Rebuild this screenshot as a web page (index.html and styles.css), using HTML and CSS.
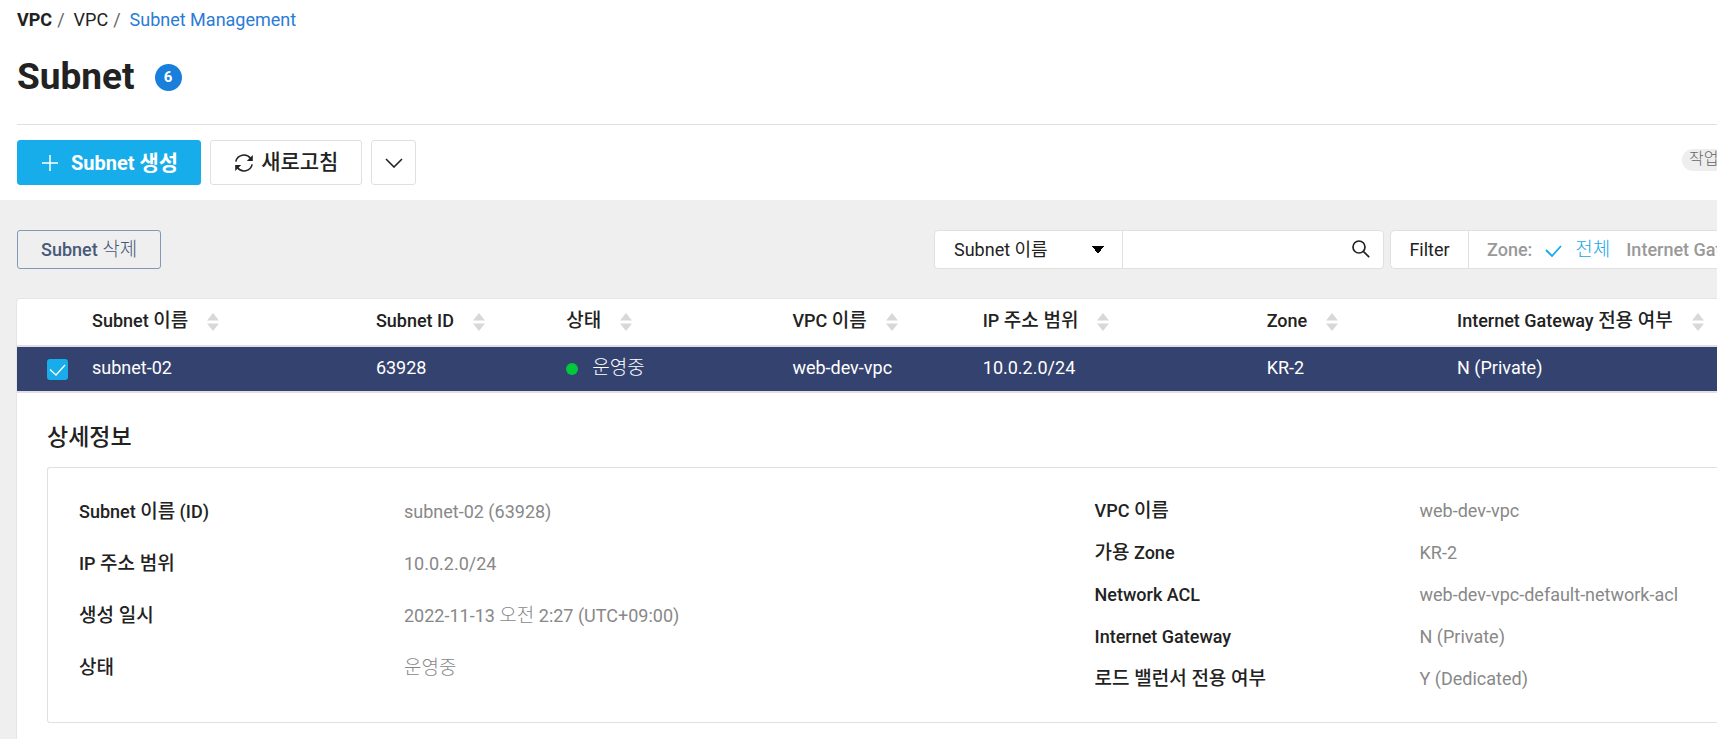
FILE: index.html
```html
<!DOCTYPE html>
<html lang="ko">
<head>
<meta charset="utf-8">
<meta name="viewport" content="width=device-width, initial-scale=1">
<title>Subnet Management</title>
<link rel="stylesheet" href="styles.css">
</head>
<body>
<svg class="sprite" aria-hidden="true">
  <symbol id="sort" viewBox="0 0 12 18"><path d="M6 0l6 7.500H0zM0 10.500h12L6 18z" fill="#d8d8d8"/></symbol>
</svg>
<header class="page-header">
  <nav class="breadcrumb" aria-label="Breadcrumb">
    <strong>VPC</strong><span class="slash">/</span><span>VPC</span><span class="slash">/</span><a href="#">Subnet Management</a>
  </nav>
  <div class="title-row">
    <h1>Subnet</h1>
    <span class="count">6</span>
  </div>
  <div class="actions">
    <button class="btn btn-primary" type="button">
      <svg width="16" height="16" viewBox="0 0 16 16"><path d="M8 0v16M0 8h16" stroke="#fff" stroke-width="1.500"/></svg>
      <span>Subnet <span class="ko">생성</span></span>
    </button>
    <button class="btn btn-refresh" type="button">
      <svg width="20" height="20" viewBox="0 0 20 20" fill="none" stroke="#222" stroke-width="1.500"><path d="M1.800 8.600A8.300 8.300 0 0 1 16.600 5.500M18.200 11.400A8.300 8.300 0 0 1 3.400 14.500"/><path d="M18.800 2v6h-6zM1.200 18v-6h6z" fill="#222" stroke="none"/></svg>
      <span class="ko">새로고침</span>
    </button>
    <button class="btn btn-more" type="button" aria-label="더보기">
      <svg width="18" height="10" viewBox="0 0 18 10" fill="none" stroke="#222" stroke-width="1.600"><path d="M1 1l8 8 8-8"/></svg>
    </button>
    <span class="tag">작업</span>
  </div>
</header>
<main class="content">
  <div class="toolbar">
    <button class="btn-delete" type="button">Subnet <span class="ko">삭제</span></button>
    <form class="search">
      <select aria-label="검색 조건"><option>Subnet 이름</option></select>
      <input type="text" aria-label="검색어">
      <button type="button" aria-label="검색"><svg width="18" height="18" viewBox="0 0 18 18" fill="none" stroke="#222" stroke-width="1.700"><circle cx="7" cy="7" r="6"/><path d="M11.300 11.300L17.200 17.200"/></svg></button>
    </form>
    <div class="filter">
      <button class="filter-name" type="button">Filter</button>
      <div class="filter-values">
        <span class="filter-label">Zone:</span>
        <svg width="17" height="12" viewBox="0 0 17 12" fill="none" stroke="#1aa7ec" stroke-width="1.800"><path d="M1 5l6 6 9-10"/></svg>
        <a class="ko" href="#">전체</a>
        <span class="filter-label gateway">Internet Gateway</span>
      </div>
    </div>
  </div>
  <section class="panel">
    <table class="subnets">
      <colgroup><col class="c-check"><col class="c-wide"><col class="c-slim"><col class="c-mid"><col class="c-slim"><col class="c-wide"><col class="c-slim"><col></colgroup>
      <thead>
        <tr>
          <td></td>
          <th scope="col">Subnet <span class="ko">이름</span><svg class="sort"><use href="#sort"/></svg></th>
          <th scope="col">Subnet ID<svg class="sort"><use href="#sort"/></svg></th>
          <th scope="col"><span class="ko">상태</span><svg class="sort"><use href="#sort"/></svg></th>
          <th scope="col">VPC <span class="ko">이름</span><svg class="sort"><use href="#sort"/></svg></th>
          <th scope="col">IP <span class="ko">주소 범위</span><svg class="sort"><use href="#sort"/></svg></th>
          <th scope="col">Zone<svg class="sort"><use href="#sort"/></svg></th>
          <th scope="col">Internet Gateway <span class="ko">전용 여부</span><svg class="sort"><use href="#sort"/></svg></th>
        </tr>
      </thead>
      <tbody>
        <tr>
          <td class="check-cell"><label class="check"><input type="checkbox" checked aria-label="subnet-02"><svg width="17" height="12" viewBox="0 0 17 12" fill="none" stroke="#fff" stroke-width="1.300"><path d="M1 5.500l6 5.500L16 1"/></svg></label></td>
          <td>subnet-02</td>
          <td>63928</td>
          <td><span class="status"><span class="dot"></span><span class="ko">운영중</span></span></td>
          <td>web-dev-vpc</td>
          <td>10.0.2.0/24</td>
          <td>KR-2</td>
          <td>N (Private)</td>
        </tr>
      </tbody>
    </table>
    <div class="detail">
      <h2>상세정보</h2>
      <div class="detail-box">
        <dl class="facts facts-left">
          <dt>Subnet <span class="ko">이름</span> (ID)</dt><dd>subnet-02 (63928)</dd>
          <dt>IP <span class="ko">주소 범위</span></dt><dd>10.0.2.0/24</dd>
          <dt><span class="ko">생성 일시</span></dt><dd>2022-11-13 <span class="ko">오전</span> 2:27 (UTC+09:00)</dd>
          <dt><span class="ko">상태</span></dt><dd><span class="ko">운영중</span></dd>
        </dl>
        <dl class="facts facts-right">
          <dt>VPC <span class="ko">이름</span></dt><dd>web-dev-vpc</dd>
          <dt><span class="ko">가용</span> Zone</dt><dd>KR-2</dd>
          <dt>Network ACL</dt><dd>web-dev-vpc-default-network-acl</dd>
          <dt>Internet Gateway</dt><dd>N (Private)</dd>
          <dt><span class="ko">로드 밸런서 전용 여부</span></dt><dd>Y (Dedicated)</dd>
        </dl>
      </div>
    </div>
  </section>
</main>
</body>
</html>
```
FILE: styles.css
```css
* { box-sizing: border-box; }
body {
  display: flex;
  flex-direction: column;
  min-height: 100vh;
  margin: 0;
  overflow: hidden;
  background: #fff;
  color: #222;
  font: 400 18px/24px Roboto, "Noto Sans CJK KR", sans-serif;
  white-space: nowrap;
}
button, input, select { margin: 0; color: inherit; font: inherit; }
svg { flex: none; }
a { text-decoration: none; }
.sprite { position: absolute; width: 0; height: 0; }
.ko { font-size: 19px; line-height: 1; }

.page-header { padding: 8px 0 15px 17px; }
.breadcrumb { display: flex; }
.breadcrumb .slash { padding: 0 9px 0 5px; color: #666; }
.breadcrumb a { color: #2a7bd6; }
.title-row {
  display: flex;
  align-items: center;
  gap: 20px;
  padding: 21px 0 23px;
  border-bottom: 1px solid #e0e0e0;
}
h1 { margin: 0; font-size: 37px; line-height: 48px; }
.count {
  width: 27px;
  height: 27px;
  border-radius: 50%;
  background: #1a7fdb;
  color: #fff;
  font-size: 15px;
  font-weight: 700;
  line-height: 27px;
  text-align: center;
}
.actions { display: flex; gap: 9px; padding-top: 15px; }
.btn {
  display: flex;
  align-items: center;
  justify-content: center;
  height: 45px;
  padding: 0 24px;
  border: 1px solid #e0e0e0;
  border-radius: 3px;
  background: #fff;
  font-size: 20px;
  font-weight: 500;
}
.btn .ko { font-size: 21px; }
.btn-primary { gap: 13px; padding-right: 22px; border-color: #17adea; background: #17adea; color: #fff; font-weight: 700; }
.btn-refresh { gap: 7px; padding: 0 23px; }
.btn-more { width: 45px; padding: 0; }
.tag {
  width: 35px;
  height: 22px;
  margin: 9px 0 0 auto;
  padding-left: 7px;
  border-radius: 11px 0 0 11px;
  overflow: hidden;
  background: #eee;
  color: #666;
  font-size: 16px;
  font-weight: 300;
  line-height: 20px;
}

.content { flex: 1; display: flex; flex-direction: column; padding: 30px 0 0 16px; background: #efefef; }
.toolbar { display: flex; height: 39px; margin-bottom: 29px; padding-left: 1px; }
.btn-delete {
  padding: 0 23px;
  border: 1px solid #8199b5;
  border-radius: 3px;
  background: transparent;
  color: #465a78;
  font-weight: 500;
}
.btn-delete .ko { font-weight: 300; }
.search {
  display: flex;
  width: 450px;
  margin: 0 6px 0 auto;
  border: 1px solid #e0e0e0;
  border-radius: 4px;
  overflow: hidden;
  background: #fff;
}
.search select {
  width: 188px;
  padding: 0 19px;
  border: 0;
  border-right: 1px solid #e0e0e0;
  appearance: none;
  background: linear-gradient(to bottom left, #000 50%, transparent 51%) 157px 15px / 6px 8px no-repeat, linear-gradient(to bottom right, #000 50%, transparent 51%) 163px 15px / 6px 8px no-repeat;
}
.search input { flex: 1; min-width: 0; border: 0; }
.search button { width: 44px; padding: 4px 0 0; border: 0; background: none; }
.filter { display: flex; width: 327px; border: 1px solid #e0e0e0; border-right: 0; border-radius: 5px 0 0 5px; background: #fff; overflow: hidden; }
.filter-name { flex: none; width: 78px; padding: 0; border: 0; border-right: 1px solid #e0e0e0; background: none; }
.filter-values { display: flex; align-items: center; padding-left: 18px; }
.filter-label { color: #999; font-weight: 500; }
.filter-values svg { margin: 2px 13px 0; }
.filter-values a { color: #1aa7ec; font-weight: 300; }
.filter-values .gateway { margin-left: 16px; }

.panel { flex: 1; border: 1px solid #e5e5e5; border-width: 1px 0 0 1px; border-radius: 4px 0 0 0; background: #fff; }
.subnets { width: 100%; border-collapse: collapse; table-layout: fixed; }
.c-check { width: 75px; }
.c-wide { width: 16.7%; }
.c-slim { width: 11.2%; }
.c-mid { width: 13.3%; }
.subnets th, .subnets td { padding: 0; text-align: left; }
.subnets th { height: 47px; padding-bottom: 3px; font-weight: 500; }
.subnets tr { border-bottom: 2px solid #e0e0e4; }
.sort { width: 12px; height: 18px; margin-left: 19px; vertical-align: -4px; }
.subnets tbody td { height: 46px; padding-bottom: 3px; background: #344270; color: #fff; }
.check { display: grid; place-items: center; width: 21px; height: 21px; margin: 4px 0 0 30px; border-radius: 3px; background: #17adea; }
.check input { grid-area: 1 / 1; width: 21px; height: 21px; margin: 0; opacity: 0; }
.check svg { grid-area: 1 / 1; pointer-events: none; }
.status { display: flex; align-items: center; gap: 14px; }
.status .ko { font-weight: 300; }
.dot { width: 12px; height: 12px; margin-top: 3px; border-radius: 50%; background: #00c83c; }

.detail { padding: 30px 0 0 30px; }
h2 { margin: 0 0 14px; font-size: 23px; font-weight: 500; line-height: 30px; }
.detail-box { display: flex; padding: 18px 0 18px 31px; border: 1px solid #e0e0e0; border-right: 0; border-radius: 3px 0 0 3px; }
.facts { display: grid; margin: 0; align-content: start; padding-bottom: 4px; }
.facts-left { flex: 0 0 62%; grid-template-columns: 325px 1fr; grid-auto-rows: 52px; }
.facts-right { flex: 1; grid-template-columns: 325px 1fr; grid-auto-rows: 42px; padding-top: 4px; }
.facts dt, .facts dd { margin: 0; align-self: center; }
.facts dt { font-weight: 500; }
.facts dd { color: #888; }
.facts dd .ko { font-weight: 300; }
```
